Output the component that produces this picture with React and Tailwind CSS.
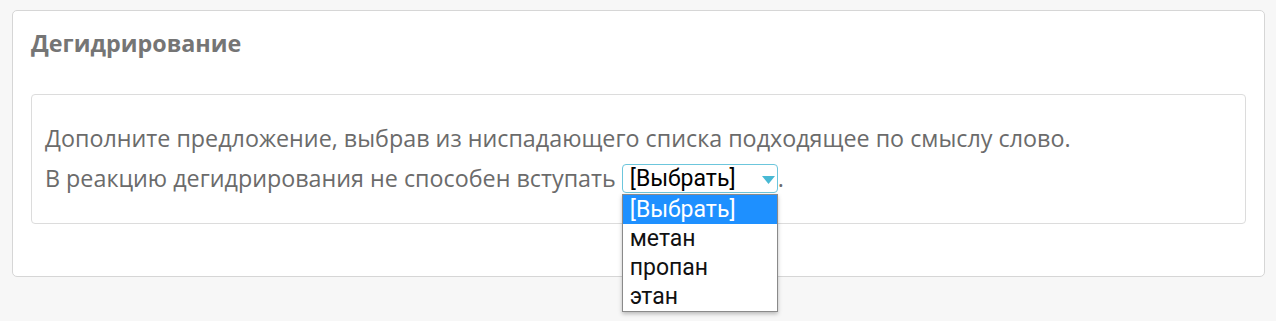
import React from "react";

const options = ["[Выбрать]", "метан", "пропан", "этан"];

function FakeSelect() {
  return (
    <span className="relative inline-block align-middle mb-[4px]">
      <span className="flex items-center justify-between w-[156px] h-[29px] border border-[#6cc6dc] rounded-[4px] bg-white pl-[7px] pr-[2px] font-['Roboto',sans-serif] text-[23px] leading-none text-black">
        <span>[Выбрать]</span>
        <svg width="13" height="8" viewBox="0 0 13 8" className="mt-[2px]">
          <polygon points="0,0 13,0 6.5,8" fill="#48b9d4" />
        </svg>
      </span>
      <ul className="absolute left-0 top-[30px] w-[156px] border border-[#8a8a8a] bg-white shadow-[0_2px_4px_rgba(0,0,0,0.25)] font-['Roboto',sans-serif] text-[23px] leading-[29px] text-[#111] z-10">
        {options.map((o, i) => (
          <li
            key={o}
            className={i === 0 ? "h-[29px] pl-[7px] bg-[#1e90ff] text-white" : "h-[29px] pl-[7px]"}
          >
            {o}
          </li>
        ))}
      </ul>
    </span>
  );
}

export default function App() {
  return (
    <div className="min-h-[321px] bg-[#f7f7f7] pt-[10px] pl-[12px] pr-[11px] font-['Open_Sans',sans-serif]">
      <div className="bg-white border border-[#d6d6d6] rounded-[5px] pt-[16px] pb-[52px] pl-[18px] pr-[18px]">
        <h2 className="text-[23.3px] leading-[32px] font-bold text-[#757575]">Дегидрирование</h2>
        <div className="mt-[35px] border border-[#dcdcdc] rounded-[4px] pt-[23px] pb-[25px] pl-[13px] text-[23.3px] leading-[40px] text-[#6b6b6b]">
          <div>Дополните предложение, выбрав из ниспадающего списка подходящее по смыслу слово.</div>
          <div>
            В реакцию дегидрирования не способен вступать <FakeSelect />.
          </div>
        </div>
      </div>
    </div>
  );
}
